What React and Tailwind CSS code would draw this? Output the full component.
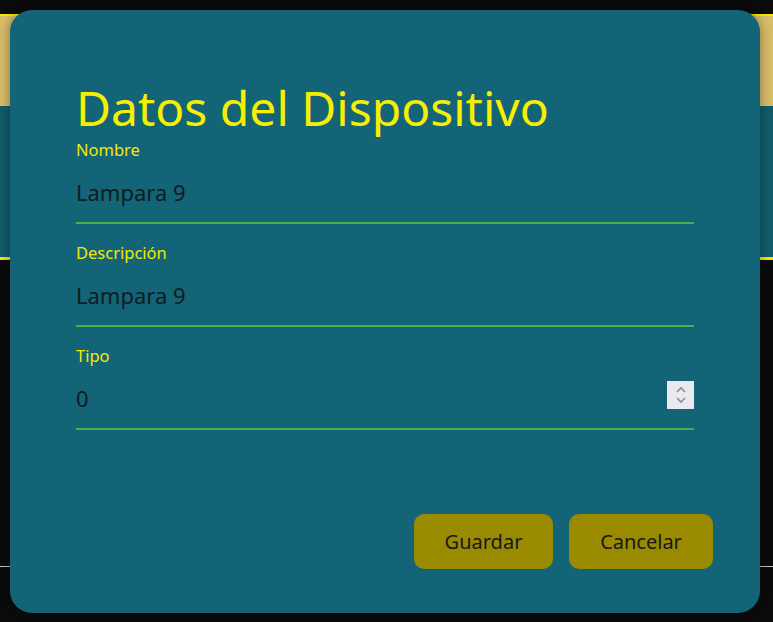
import React from 'react';

const font = { fontFamily: '"Noto Sans", "Open Sans", sans-serif' };

function Field({ label, value, spinner }) {
  return (
    <div className="flex flex-col">
      <label className="text-[16.5px] leading-[20px] text-[#f2ea00]">{label}</label>
      <div className="flex items-center h-[62px] border-b-2 border-[#4caf50] mt-[2px]">
        <span className="flex-1 text-[22px] text-[#0c1d22]">{value}</span>
        {spinner && (
          <div className="w-[27px] h-[28px] bg-[#e9e9ef] flex flex-col items-center justify-center mb-[6px]">
            <svg width="14" height="22" viewBox="0 0 14 22" fill="none" stroke="#8c8c96" strokeWidth="1.6">
              <path d="M3 8 L7 4 L11 8" />
              <path d="M3 14 L7 18 L11 14" />
            </svg>
          </div>
        )}
      </div>
    </div>
  );
}

export default function App() {
  return (
    <div className="relative w-[773px] h-[622px] bg-[#0b0b0b] overflow-hidden" style={font}>
      {/* page behind the dialog */}
      <div className="pt-[14px]">
        <div className="h-[92px] bg-[#d8bd69] border-t-2 border-[#f7e600]" />
        <div className="h-[154px] bg-[#125b6b] border-b-[3px] border-[#f7e600]" />
        <div className="mt-[306px] h-px bg-[#c8c8c8]" />
      </div>

      {/* dialog */}
      <div className="absolute left-[10px] top-[10px] w-[750px] h-[603px] rounded-[22px] bg-[#136476] shadow-[0_0_12px_rgba(0,0,0,0.4)] flex flex-col pl-[66px] pr-[47px] pt-[74px] pb-[44px]">
        <h1 className="text-[48px] leading-[48px] text-[#f7ef00] font-normal">Datos del Dispositivo</h1>
        <div className="flex flex-col gap-[19px] pr-[19px] mt-[8px]">
          <Field label="Nombre" value="Lampara 9" />
          <Field label="Descripción" value="Lampara 9" />
          <Field label="Tipo" value="0" spinner />
        </div>
        <div className="mt-auto flex justify-end gap-[16px]">
          <button className="w-[139px] h-[55px] rounded-[10px] bg-[#998a00] text-[20px] text-[#171717]">Guardar</button>
          <button className="w-[144px] h-[55px] rounded-[10px] bg-[#998a00] text-[20px] text-[#171717]">Cancelar</button>
        </div>
      </div>
    </div>
  );
}
